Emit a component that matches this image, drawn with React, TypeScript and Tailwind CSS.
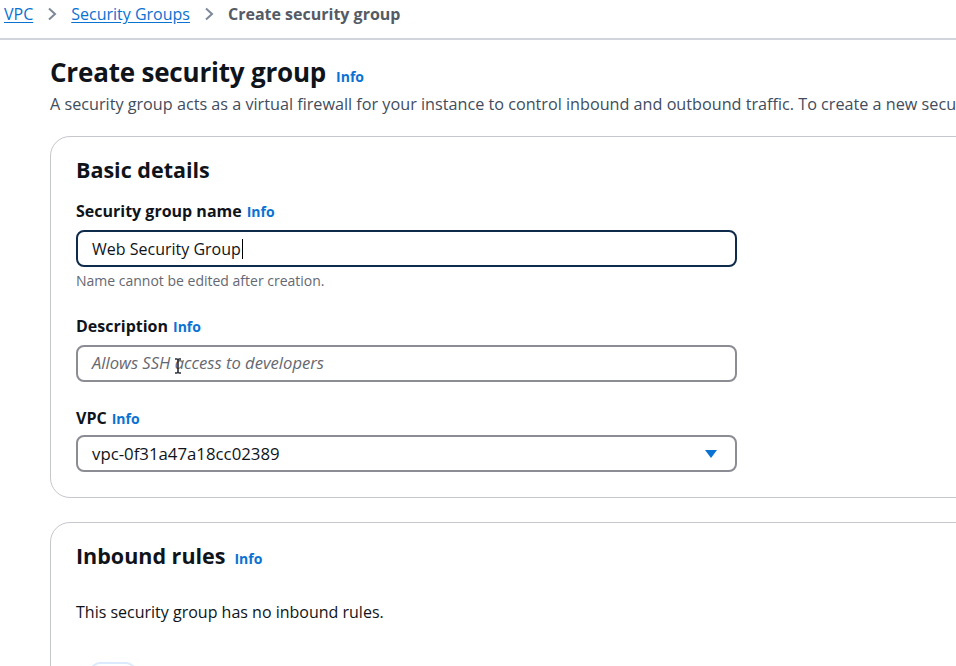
import React from "react";

const font = { fontFamily: '"Open Sans", "Noto Sans", Arial, sans-serif' };

function Info() {
  return <span className="ml-[5px] text-[14px] font-bold text-[#0972d3]">Info</span>;
}

function Chevron() {
  return (
    <span className="mx-[14px] flex h-[24px] items-center text-[#7d8998]">
      <svg width="10" height="14" viewBox="0 0 10 14">
        <path d="M2 1.5 L8 7 L2 12.5" fill="none" stroke="currentColor" strokeWidth="2" />
      </svg>
    </span>
  );
}

export default function App() {
  return (
    <div className="relative h-[666px] w-[956px] overflow-hidden bg-white text-[#0f141a]" style={font}>
      {/* Breadcrumb */}
      <div className="flex h-[40px] items-start border-b-2 border-[#d1d5db] pl-[4px] pt-[2px] text-[16px] leading-[24px]">
        <a className="text-[#0972d3] underline underline-offset-2">VPC</a>
        <Chevron />
        <a className="text-[#0972d3] underline underline-offset-2">Security Groups</a>
        <Chevron />
        <span className="font-bold text-[#545b64]">Create security group</span>
      </div>

      <div className="w-[1300px] pl-[50px]">
        {/* Header */}
        <div className="mt-[14px] flex items-baseline">
          <h1 className="text-[26px] font-bold leading-[36px] tracking-[-0.2px]">Create security group</h1>
          <span className="ml-[10px] text-[14px] font-bold text-[#0972d3]">Info</span>
        </div>
        <p className="mt-[2px] whitespace-nowrap text-[16.2px] leading-[24px] text-[#414d5c]">
          A security group acts as a virtual firewall for your instance to control inbound and outbound traffic. To create a new security group, complete the fields below.
        </p>

        {/* Basic details */}
        <div className="mt-[20px] rounded-[20px] border border-[#c6c6cd] px-[25px] pb-[25px] pt-[17px]">
          <h2 className="text-[21.5px] font-bold leading-[32px]">Basic details</h2>

          <div className="mt-[14px] flex items-baseline leading-[22px]">
            <span className="text-[16px] font-bold">Security group name</span>
            <Info />
          </div>
          <div className="mt-[7px] flex h-[37px] w-[661px] items-center rounded-[8px] border-2 border-[#0f2b4c] px-[14px] text-[16px]">
            Web Security Group<span className="ml-[1px] inline-block h-[20px] w-[1px] bg-black" />
          </div>
          <div className="mt-[5px] text-[14px] leading-[18px] text-[#656871]">Name cannot be edited after creation.</div>

          <div className="mt-[25px] flex items-baseline leading-[22px]">
            <span className="text-[16px] font-bold">Description</span>
            <Info />
          </div>
          <div className="relative mt-[7px] flex h-[37px] w-[661px] items-center rounded-[8px] border-2 border-[#8c8c94] px-[14px] text-[16.6px] italic text-[#656871]">
            Allows SSH access to developers
            <svg className="absolute left-[96px] top-[11px]" width="8" height="16" viewBox="0 0 8 16">
              <path d="M1 1 H3 Q4 1 4 3 V13 Q4 15 3 15 H1 M7 1 H5 Q4 1 4 3 M4 13 Q4 15 5 15 H7" fill="none" stroke="#2b2f3a" strokeWidth="1.6" />
            </svg>
          </div>

          <div className="mt-[25px] flex items-baseline leading-[22px]">
            <span className="text-[16px] font-bold">VPC</span>
            <Info />
          </div>
          <div className="mt-[5px] flex h-[37px] w-[661px] items-center justify-between rounded-[8px] border-2 border-[#8c8c94] pl-[14px] pr-[17px] text-[16.8px]">
            <span>vpc-0f31a47a18cc02389</span>
            <svg width="14" height="10" viewBox="0 0 14 10"><path d="M1 1 H13 L7 9 Z" fill="#0972d3" /></svg>
          </div>
        </div>

        {/* Inbound rules */}
        <div className="mt-[24px] h-[300px] rounded-[20px] border border-[#c6c6cd] px-[25px] pt-[17px]">
          <div className="flex items-baseline">
            <h2 className="text-[21.5px] font-bold leading-[32px]">Inbound rules</h2>
            <span className="ml-[9px] text-[14px] font-bold text-[#0972d3]">Info</span>
          </div>
          <p className="mt-[28px] text-[16px] leading-[24px]">This security group has no inbound rules.</p>
          <div className="ml-[14px] mt-[38px] h-[20px] w-[46px] rounded-full border-2 border-[#dbeafe]" />
        </div>
      </div>
    </div>
  );
}
